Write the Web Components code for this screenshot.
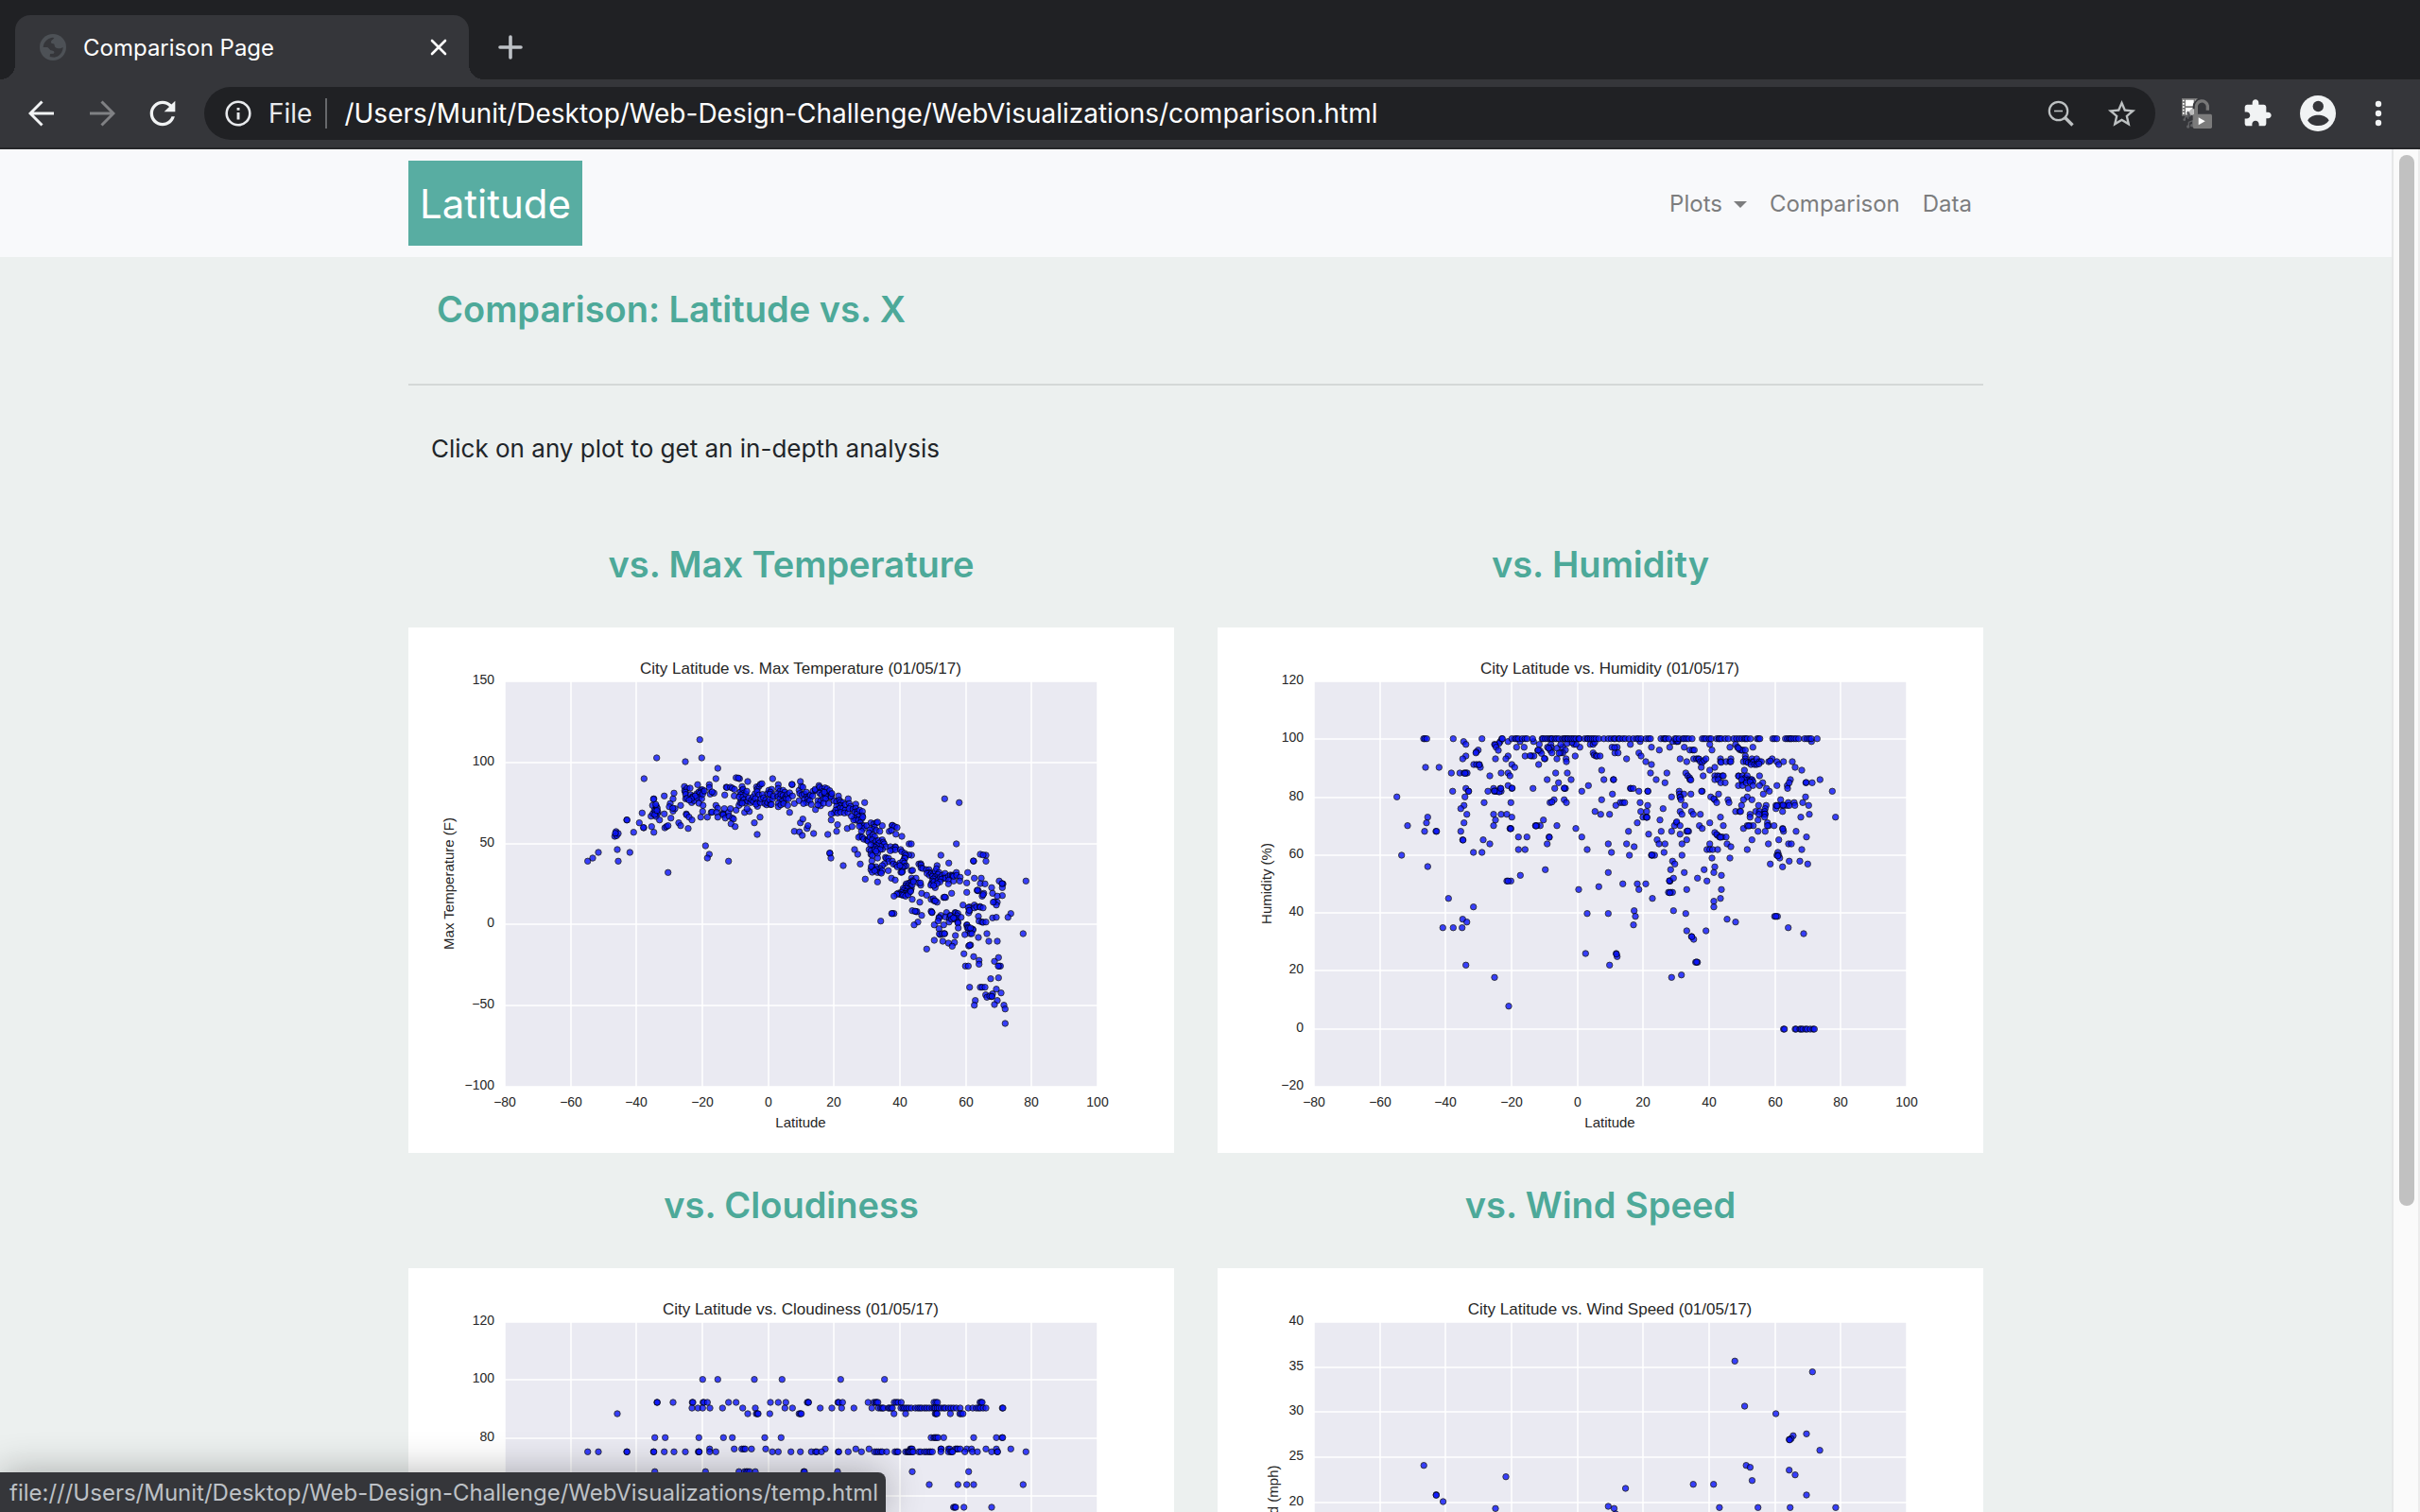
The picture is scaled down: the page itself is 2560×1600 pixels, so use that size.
<!DOCTYPE html>
<html lang="en">
<head>
<meta charset="utf-8">
<title>Comparison Page</title>
<style>
  html, body { margin: 0; height: 100%; overflow: hidden; }
  body { font-family: Inter, "Liberation Sans", sans-serif; }
</style>
</head>
<body>
<browser-window>
  <browser-tab slot="tab">Comparison Page</browser-tab>
  <browser-toolbar slot="toolbar" url="/Users/Munit/Desktop/Web-Design-Challenge/WebVisualizations/comparison.html"></browser-toolbar>
  <site-navbar>Latitude</site-navbar>
  <site-content>
    <span slot="title">Comparison: Latitude vs. X</span>
    <span slot="intro">Click on any plot to get an in-depth analysis</span>
    <plot-card name="Max Temperature" href="temp.html"></plot-card>
    <plot-card name="Humidity" href="humidity.html"></plot-card>
    <plot-card name="Cloudiness" href="cloudiness.html"></plot-card>
    <plot-card name="Wind Speed" href="wind.html"></plot-card>
  </site-content>
  <status-bubble slot="status">file:///Users/Munit/Desktop/Web-Design-Challenge/WebVisualizations/temp.html</status-bubble>
</browser-window>

<script>
const define = (name, html, setup) => customElements.define(name, class extends HTMLElement {
  constructor() {
    super();
    this.attachShadow({ mode: 'open' });
  }
  connectedCallback() {
    this.shadowRoot.innerHTML = typeof html === 'function' ? html(this) : html;
    if (setup) setup(this);
  }
});

/* Scatter data. Each plot keeps its points as "x,y" pairs on its own sheet;
   `map` places the sheet on the 810 x 556 figure: [left, top, x scale, y scale]. */
const plots = {
  'Max Temperature': {
    label: 'Max Temperature (F)', labelX: 48, max: 150, min: -100, step: 50, map: [178, 106, 3, 3],
    points: `391,38 254,96 345,108 397,96 448,129 214,162 442,162 506,159 517,162 513,160 543,171 622,162 710,171 1168,226 1214,238
    1205,369 1156,405 1181,430 1281,402 1299,405 1299,424 1260,424 1259,423 1290,404 1426,487 1378,590 1369,602 1417,654
    35,424 51,414 69,396 129,387 169,396 132,424 290,460 409,375 421,402 415,414 482,424 159,293 160,293 181,332 121,345 125,330 127,343 132,336 123,335
    199,302 208,271 213,318 212,317 238,314 245,332 245,226 244,227 241,247 236,281 242,273 247,262 253,250 256,256 258,268 250,265 256,274 252,282 263,293 251,244 248,276 255,263
    278,217 278,274 280,318 285,314 290,311 299,287 297,241 294,251 306,226 309,208 306,265 312,257 330,247 305,256 324,302 330,311 354,320
    348,274 349,277 357,284 366,293 342,187 343,200 350,193 360,192 345,205 346,212 346,226 351,224 362,213 368,219 370,220 365,238 373,232 381,210 384,181 388,204 395,198 399,197 400,204 392,208 390,220 382,223 397,226 388,240 401,247 376,217 364,226 357,230 400,211 405,201
    400,266 394,284 415,284 421,181 421,190 424,211 436,208 430,204 442,247 448,256 427,269 430,268 444,269 448,284 463,272 466,274 465,277 469,257 472,287 482,269 488,257 484,281 494,287 498,290 490,305 503,314
    475,189 477,190 488,189 494,192 470,214 501,196 500,217 506,262 515,247 519,238 522,229 525,187 525,199 519,205 528,196 530,208 521,213 516,220 528,220 537,211 540,202 531,229 535,238 543,233 546,223 525,240 533,269 548,266 541,257 552,238 555,229 560,220 561,235 566,210 571,188 573,196 579,186 583,180 588,178 573,203 578,214 567,225 573,238 574,250 569,243 583,238 585,226 590,212 593,223 600,230 597,241 603,245 606,238 615,244 612,229 618,244 606,209 610,199 619,196 615,205 613,211 622,226 625,217 640,181 640,193 645,202 655,199 661,205 636,210 639,219 645,226 648,212 655,215 663,220 658,229 651,235 640,240 640,251 648,245 657,241 670,247 665,225 669,212 676,207 672,226 684,181 683,180 685,217 691,241 676,269
    564,302 582,284 573,339 706,199 713,187 718,189 708,209 715,214 722,211 729,205 730,220 722,229 737,219 734,226 730,238 740,231 742,214 706,232 720,241 750,202 758,199 749,217 745,244 757,196 769,184 771,189 779,194 788,191 795,194 780,203 771,208 777,213 788,211 797,207 803,200 808,212 805,219 797,220 790,217 786,205 766,232 774,233 784,226 790,226 774,248 758,260 766,245 784,240 800,241 808,220 810,209 831,217
    691,329 707,331 716,342 731,320 734,311 752,336 710,302 718,290 797,339 804,399 803,398 807,414 846,438 862,226 886,243 914,238 817,232 825,235 834,230 838,236 845,238 840,247 834,248 825,250 830,259 836,256 845,256 852,262 853,244 865,241 869,250 822,262 817,270 808,274 828,271 838,269 850,271 861,270 865,257 877,259 886,256 883,268 891,266 890,274 898,262 907,266 907,280 895,283 882,287 887,294 879,293 872,281 894,293 904,290 908,284 808,293 828,308 825,329 859,320 874,314 900,302 904,311 912,311 910,320 904,329 897,313 921,311 934,302 943,305 951,302 955,300 945,316 939,323 951,326 962,329 970,311 931,324 928,334 900,345 895,348 907,348 911,354 921,357 926,354 925,360 931,347 940,341 946,346 938,356 882,387 892,402 900,433 916,481
    944,366 950,360 958,358 970,356 961,366 973,364 976,369 981,378 970,386 964,377 952,374 943,377 947,380 933,372 928,387 934,391 946,387 955,385 963,387 934,402 938,406 955,399 955,414 937,423 950,392 992,329 1001,311 1002,310 1009,314 1017,317 999,326 1013,338 1032,345 1055,369 1062,369 1063,405 1054,404 1062,454 1066,453
    996,378 1011,378 1012,380 1002,387 1011,388 995,391 1028,387 1032,394 1041,399 1044,405 1040,414 1042,415 980,412 983,415 990,415 990,425 977,432 970,438 1002,424 1005,433 1014,436 1018,442 1026,430 1035,424 1040,430 1046,439 1040,441 1034,444 1026,438 962,447 950,442 938,442 934,451 938,459 952,450 955,460 964,459 970,454 967,462 989,454 955,490 935,441 946,454 999,478 1011,484 1029,459 1034,456 1032,459 965,614 1002,590 1007,590 1000,590
    1086,433 1092,432 1093,436 1093,445 1098,447 1110,451 1118,451 1119,460 1112,463 1120,469 1126,463 1132,466 1129,472 1138,456 1144,438 1142,448 1150,460 1147,466 1138,474 1140,480 1132,480 1129,487 1126,496 1124,500 1134,489 1147,484 1154,475 1160,469 1169,463 1165,478 1158,481 1153,490 1171,478 1180,472 1186,468 1192,469 1195,469 1181,484 1196,487 1180,496 1196,472 1205,460 1206,469 1217,475 1216,487 1241,460 1138,508 1144,495 1133,501
    1063,478 1066,486 1077,478 1085,493 1092,500 1091,493 1059,492 1053,494 1046,496 1044,502 1053,501 1059,504 1062,511 1060,517 1050,511 1044,509 1036,511 1037,517 1046,520 1055,523 1049,526 1041,526 1036,526 1029,523 1020,526 1026,529 1032,531 1037,532 1044,535 1016,529 1007,535 1052,530 1060,520 1065,499 1069,489 1065,545 1089,554 1095,526 1111,532 1125,545 1132,543 1135,550 1144,554 1138,550 1165,539 1171,539 1168,538 1190,526 1238,493 1238,523 1262,478 1284,478 1281,495 1296,496 1271,517 1275,518 1292,526 1287,535 1290,530 1272,516 1317,508 1320,526 1341,487 1351,496 1353,496 1351,508 1350,495 1351,533 1335,535 1326,553 1335,554 1332,563 1322,554
    1065,581 1077,584 1080,584 1074,583 1095,596 1083,617 1071,626 1125,583 1128,587 1127,586 1174,587 1156,596 1150,602 1150,605 1147,614 1170,601 1183,605 1186,596 1187,597 1182,617 1190,608 1201,587 1203,588 1210,590 1208,597 1205,605 1220,602 1201,608 1210,617 1210,620 1196,604 1211,636 1135,626 1150,638 1165,626 1154,657 1151,655 1160,654 1168,654 1167,654 1202,660 1135,675 1162,678 1180,684 1199,682 1192,694 1111,703 1226,563 1247,569 1262,563 1243,571 1247,581 1244,588 1246,580 1262,572 1269,569 1280,568 1281,570 1290,572 1275,599 1277,614 1286,617 1290,618 1299,617 1320,604 1332,602 1238,626 1239,627 1240,635 1244,645 1250,641 1257,640 1258,642 1249,654 1254,654 1232,657 1244,636 1250,636 1275,666 1302,654 1308,678 1335,678 1244,693 1250,690 1247,691 1229,718 1260,727 1277,739 1277,751 1326,742 1339,730 1234,757 1243,757 1341,757 1345,757 1338,757 1339,794 1314,797 1247,824 1281,824 1287,824 1296,824 1332,830 1347,842 1320,845 1298,848 1302,856 1317,854 1311,852 1318,853 1265,866 1335,866 1262,881 1326,879 1356,881 1360,893 1360,939`
  },
  'Humidity': {
    label: 'Humidity (%)', labelX: 57, max: 120, min: -20, step: 20, map: [182, 106, 3, 3],
    rows: { 35: '108 112 118 202 293 356 358 388 398 403 409 421 430 436 454 484 487 494 501 508 513 516 525 530 537 549 555 558 564 567 574 579 585 591 600 602 619 627 630 637 643 649 655 664 680 694 703 712 716 727 730 740 748 760 773 784 790 798 814 822 828 861 870 874 877 886 905 910 919 931 935 942 949 960 992 998 1004 1014 1020 1038 1045 1047 1053 1065 1075 1092 1101 1110 1118 1126 1130 1135 1145 1166 1171 1175 1216 1222 1229 1256 1262 1268 1272 1276 1283 1290 1298 1317 1325 1332 1338 1357',
            957: '1250 1253 1287 1290 1302 1306 1311 1320 1325 1335 1344 1348' },
    points: `235,44 242,53 351,44 376,44 347,50 333,53 335,55 414,44 457,44 338,62 345,72 281,71 275,77 274,80 242,90 232,99 336,99 376,90 369,99 403,62 427,62 430,90 451,90 458,90 446,89 475,53 470,72 478,74 482,82 472,71 473,117 493,99 491,98 501,62 512,53 513,63 510,72 515,80 505,65 531,65 531,99 549,62 543,53 558,71 550,80 543,80 538,81 560,99 561,108 589,90 604,62 585,53 592,53 578,47 563,50 637,53 646,53 651,47 646,80 649,87 655,90 659,90 668,90 706,62 715,80 722,62 725,80 714,63 764,53 795,44 752,99 791,80 798,90 813,108 831,117 831,62 856,71 889,62 898,44 910,44 915,44 914,43 935,62 953,71 962,71 967,71 1016,53 1023,71 1080,62 1098,53 1104,62 1111,70 1117,72 1120,71 1129,71 1129,90 1153,62 1107,65 1339,44
    114,126 157,126 267,117 276,117 285,117 288,126 284,118 388,117 397,126 196,144 223,144 236,144 242,144 246,144 239,145 318,153 354,144 376,144 382,153 527,144 564,144 500,165 576,165 536,175 524,193 555,193 558,193 554,192 631,184 610,202 673,135 680,165 710,165 711,165 707,211 673,229 828,144 880,144 846,165 874,175 922,99 943,108 965,99 974,99 980,99 982,100 986,108 992,110 998,104 1004,99 989,126 1016,135 1032,126 1050,99 1050,108 1052,110 1068,108 1080,108 1083,99 1083,108 995,153 940,144 946,153 952,159 953,165 956,166
    1129,99 1123,108 1132,108 1138,111 1147,108 1150,99 1153,108 1155,109 1147,117 1158,117 1165,117 1168,108 1165,99 1174,108 1180,108 1172,115 1203,108 1214,99 1208,106 1229,108 1235,117 1250,108 1278,108 1287,126 1308,135 1126,135 1032,153 1041,153 1047,154 1056,153 1059,153 1032,165 1043,165 1051,175 1065,175 1107,153 1108,154 1120,153 1129,159 1135,153 1138,165 1147,165 1150,165 1153,171 1135,168 1126,165 1120,172 1117,165 1107,184 1120,184 1132,175 1144,172 1153,184 1138,193 1174,153 1184,175 1174,184 1196,193 1205,202 1186,211 1229,184 1262,184 1272,165 1263,193 1268,175 1321,175 1322,174 1341,175 1366,165 1405,202
    23,220 200,202 242,193 250,202 251,202 239,220 300,238 236,247 226,257 312,202 330,193 332,202 338,202 345,202 351,193 354,202 341,202 348,204 333,201 353,193 376,184 388,193 389,192 385,238 455,193 522,229 509,238 515,236 554,229 561,238 764,193 766,193 773,193 791,202 819,202 820,202 919,202 920,211 934,211 956,211 895,220 922,220 922,221 925,229 992,202 990,202 1019,220 1044,211 1032,229 1029,226 1038,238 1074,229 1077,238 1135,220 1123,229 1150,229 1320,220 732,238 740,238 746,238 718,247 795,238 819,247 868,257 937,247
    245,275 236,302 226,329 232,356 233,357 121,284 117,302 57,311 111,329 147,329 149,329 330,275 354,275 372,275 388,284 336,293 330,311 382,320 385,320 384,321 488,293 478,311 463,311 467,311 464,312 531,311 591,320 610,347 652,266 670,275 698,275 797,266 804,284 816,266 816,284 814,284 817,285 786,302 858,293 922,266 928,275 958,266 964,275 986,275 910,302 904,311 911,299 922,311 983,311 992,320 862,329 895,329 943,329 949,329 946,328 1016,302 1050,284 1059,311 1098,266 1111,266 1117,247 1114,266 1171,247 1162,266 1144,275 1144,284 1174,266 1169,293 1195,247 1192,257 1190,266 1184,275 1192,275 1191,274 1172,275 1190,284 1199,302 1203,311 1220,311 1123,320 1135,311 1144,311 1154,311 1139,312 1199,311 1192,329 1169,329 1226,247 1226,257 1232,247 1241,229 1244,247 1247,266 1253,247 1262,247 1265,238 1268,247 1284,238 1286,247 1229,248 1249,246 1247,320 1250,329 1248,322 1311,238 1330,247 1305,284 1332,275 1415,284 1290,329 1323,347
    38,405 121,441 266,396 293,396 297,356 318,369 409,347 436,347 409,387 430,387 500,369 506,347 507,348 494,451 415,469 372,487 385,487 376,487 627,387 694,369 704,396 694,460 752,369 758,329 776,378 761,405 822,338 849,356 855,369 874,369 871,396 831,405 834,405 841,405 832,404 922,338 943,356 928,369 928,405 898,424 905,433 892,451 935,460 1032,333 1041,342 1038,339 1047,347 1056,347 1068,347 1050,348 1016,369 1007,387 1016,387 1025,387 1041,387 1023,414 1071,369 1083,378 1080,414 1135,387 1150,356 1202,369 1235,356 1208,433 1247,442 1232,396 1229,405 1235,405 1238,414 1232,407 1266,369 1275,369 1268,424 1302,424 1327,433 1308,387
    740,496 664,505 600,514 786,496 791,514 813,496 834,542 889,487 890,487 888,486 901,478 885,523 892,523 898,523 889,524 943,514 977,478 998,451 1007,487 1032,442 1029,460 1053,469 1053,514 1050,542 1029,551 1029,569 187,542 266,569 232,608 245,617 230,635 202,635 169,635 242,754 333,793 378,884 627,590 694,590 776,581 780,599 774,626 901,581 940,590 622,717 719,717 722,727 720,719 698,754 943,645 958,663 965,672 959,664 1004,645 971,745 977,745 974,744 895,793 926,785 1071,608 1098,617 1222,599 1231,599 1226,599 1265,635 1314,654`
  },
  'Cloudiness': {
    label: 'Cloudiness (%)', labelX: 57, max: 120, min: -20, step: 20, map: [178, 98, 3, 3],
    rows: {
      59: '400 448 564 652 838 977',
      132: '255 256 306 367 369 401 404 415 482 506 615 640 664 732 735 736 829 832 844 925 943 949 952 956 1008 1014 1020 1030 1134 1140 1145 1280 1284 1287',
      150: '366 385 400 423 463 527 567 661 685 773 810 841 880 937 958 965 970 974 989 993 998 1002 1029 1035 1040 1047 1054 1062 1075 1083 1089 1095 1104 1111 1119 1128 1134 1138 1144 1150 1157 1165 1170 1180 1188 1196 1205 1217 1243 1257 1268 1275 1281 1290 1299 1351 1353',
      168: '129 543 570 574 576 613 706 710 713 1007 1044 1138 1141 1144 1186 1216 1220 1226',
      244: '248 281 388 466 494 597 649 1125 1134 1138 1142 1147 1165 1260 1332 1350 1352',
      280: '422 500 524 530 535 555 600 789 886 928 1059 1062 1065 1156 1157 1180 1184 1202 1206 1210 1217 1238 1253 1299 1332 1378',
      289: '35 69 159 160 244 245 278 309 345 386 388 389 422 442 621 640 680 710 745 758 762 777 830 832 862 904 945 952 958 965 970 984 1010 1016 1020 1044 1050 1053 1056 1059 1064 1068 1086 1092 1104 1111 1118 1123 1129 1156 1180 1187 1190 1193 1232 1256 1272 1317 1335 1336 1426',
      352: '248 409 515 533 539 543 549 567 721 723 828 1065 1244',
      393: '1119 1210 1238 1260 1417',
      465: '1196 1200 1203 1229 1317'
    }
  },
  'Wind Speed': {
    label: 'Wind Speed (mph)', labelX: 64, max: 40, min: -5, step: 5, map: [-2, -122, 1.912, 3],
    points: `1050,661 1207,695 1070,804 1133,828 1195,892 1168,898 1164,907 1160,910 1161,911 1222,944 421,992 587,1028 446,1085 446,1087 460,1107 566,1129 829,1065 966,1052 1007,1052 1073,992 1081,998 1085,1040 1160,1007 1172,1022 1195,1086 794,1122 806,1129 809,1146 1019,1126 1097,1126 1162,1126 1254,1126`
  }
};

const minus = n => String(n).replace('-', '\u2212');

function figure(name) {
  const p = plots[name], left = 102, right = 729, top = 57, bottom = 486, mid = 415;
  let grid = '', text = '', dots = '';
  for (let v = -80; v <= 100; v += 20) {
    const x = Math.round(left + (v + 80) / 180 * (right - left));
    grid += `<path d="M${x} ${top}V${bottom}"/>`;
    text += `<text x="${x}" y="507" text-anchor="middle">${minus(v)}</text>`;
  }
  for (let v = p.min; v <= p.max; v += p.step) {
    const y = Math.round(bottom - (v - p.min) / (p.max - p.min) * (bottom - top));
    grid += `<path d="M${left} ${y}H${right}"/>`;
    text += `<text x="91" y="${y + 3}" text-anchor="end">${minus(v)}</text>`;
  }
  const pts = (p.points || '').trim().split(/\s+/).filter(Boolean).map(s => s.split(',').map(Number));
  for (const y in p.rows || {}) for (const x of p.rows[y].split(' ')) pts.push([+x, +y]);
  const [ox, oy, sx, sy] = p.map;
  for (const [x, y] of pts) dots += `<circle cx="${(ox + x / sx).toFixed(1)}" cy="${(oy + y / sy).toFixed(1)}" r="3.2"/>`;
  return `<svg viewBox="0 0 810 556" role="img" aria-label="City Latitude vs. ${name}">
    <rect width="810" height="556" fill="#fff"/>
    <rect x="${left}" y="${top}" width="${right - left}" height="${bottom - top}" fill="#eaeaf2"/>
    <g stroke="#fff" stroke-width="1.5">${grid}</g>
    <g class="dots">${dots}</g>
    <g class="tick">${text}</g>
    <text class="label" x="${mid}" y="529" text-anchor="middle">Latitude</text>
    <text class="label" transform="translate(${p.labelX} 271) rotate(-90)" text-anchor="middle">${p.label}</text>
    <text class="title" x="${mid}" y="49" text-anchor="middle">City Latitude vs. ${name} (01/05/17)</text>
  </svg>`;
}

define('plot-card', el => `<style>
  :host { display: block; min-width: 0; }
  h2 { margin: 30px 0 42px; font-size: 38px; line-height: 50px; font-weight: 600; text-align: center; color: #4da999; }
  a { display: block; }
  svg { display: block; width: 100%; height: auto; font-family: "Liberation Sans", sans-serif; fill: #262626; }
  .dots { fill: #0a14ff; stroke: #000; stroke-width: .9; }
  .dots circle { opacity: .8; }
  .tick { font-size: 14px; }
  .label { font-size: 15px; }
  .title { font-size: 17px; }
</style>
<h2>vs. ${el.getAttribute('name')}</h2>
<a href="${el.getAttribute('href')}">${figure(el.getAttribute('name'))}</a>`);

define('site-content', `<style>
  :host { display: block; max-width: 1666px; margin: 0 auto; }
  h1 { margin: 0; padding: 28px 30px 0; font-size: 38px; line-height: 54px; font-weight: 600; color: #4da999; }
  hr { margin: 52px 0 0; border: 0; border-top: 2px solid #d4d8d7; }
  p { margin: 0; padding: 47px 24px; font-size: 26px; line-height: 40px; color: #212529; }
  .grid { display: grid; grid-template-columns: 1fr 1fr; column-gap: 46px; }
</style>
<h1><slot name="title"></slot></h1>
<hr>
<p><slot name="intro"></slot></p>
<div class="grid"><slot></slot></div>`);

define('site-navbar', `<style>
  :host { display: block; background: #f8f9fb; }
  nav { max-width: 1666px; margin: 0 auto; padding: 12px 0; display: flex; justify-content: space-between; align-items: center; }
  a { text-decoration: none; }
  .brand { padding: 2px 12px 0; background: #58ada2; color: #fff; font-size: 42px; line-height: 88px; }
  ul { display: flex; gap: 24px; margin: 0; padding: 2px 12px 0 0; list-style: none; font-size: 24px; line-height: 36px; }
  li a { color: #7c7d7e; display: flex; align-items: center; gap: 12px; }
  .caret::after { content: ""; border: 7px solid transparent; border-top-color: currentColor; border-bottom: 0; }
</style>
<nav>
  <a class="brand" href="index.html"><slot></slot></a>
  <ul>
    <li><a class="caret" href="#plots">Plots</a></li>
    <li><a href="comparison.html">Comparison</a></li>
    <li><a href="data.html">Data</a></li>
  </ul>
</nav>`);

define('status-bubble', `<style>
  :host { display: block; padding: 2px 8px 0 10px; background: #35363a; color: #bdc1c6; font-size: 24px; line-height: 40px;
    border-top-right-radius: 8px; box-shadow: 0 0 40px rgba(0,0,0,.3); white-space: nowrap; }
</style><slot></slot>`);

define('browser-tab', `<style>
  :host { display: flex; align-items: center; position: relative; box-sizing: border-box; width: 480px; height: 68px; padding: 0 16px 0 26px;
    background: #35363a; border-radius: 16px 16px 0 0; color: #fff; font-size: 24px; }
  :host::before, :host::after { content: ""; position: absolute; bottom: 0; width: 16px; height: 16px; }
  :host::before { right: 100%; background: radial-gradient(circle at 0 0, transparent 16px, #35363a 16px); }
  :host::after { left: 100%; background: radial-gradient(circle at 100% 0, transparent 16px, #35363a 16px); }
  svg { display: block; }
  .name { flex: 1; padding-left: 18px; }
  button { display: flex; align-items: center; justify-content: center; width: 32px; height: 32px; padding: 0; border: 0; background: none; }
</style>
<svg width="28" height="28" viewBox="0 0 84 84"><circle cx="42" cy="42" r="42" fill="#4d5156"/><path fill="#35363a" d="M11 42C12 26 24 13 40 11L46 12C42 20 36 18 36 27C38 33 46 28 47 35C47 44 56 46 66 46L74 42C73 60 60 73 46 74L32 72L33 63L44 62C50 58 44 53 36 52C30 50 30 42 22 42Z"/></svg>
<span class="name"><slot></slot></span>
<button aria-label="Close tab"><svg width="18" height="18" viewBox="0 0 18 18"><path d="M2 2l14 14M16 2L2 16" stroke="#fff" stroke-width="2.6" stroke-linecap="round"/></svg></button>`);

define('browser-toolbar', `<style>
  :host { display: flex; align-items: center; gap: 12px; padding: 8px 12px; background: #35363a; border-bottom: 2px solid #26272a; }
  .group { display: flex; }
  button { display: flex; align-items: center; justify-content: center; width: 64px; height: 56px; padding: 0; border: 0; background: none; color: #f1f3f4; }
  svg { display: block; }
  .off { color: #808184; }
  form { flex: 1; display: flex; align-items: center; height: 56px; padding-left: 20px; padding-right: 4px; border-radius: 28px; background: #202124; color: #e8eaed; font-size: 28px; }
  label { margin-left: 16px; padding-right: 14px; border-right: 2px solid #66686b; line-height: 32px; }
  input { flex: 1; min-width: 0; margin-left: 18px; padding: 0; border: 0; outline: 0; background: none; font: inherit; color: #fff; }
  form button { color: #bdc1c2; }
</style>
<div class="group">
  <button aria-label="Back"><svg width="28" height="28" viewBox="0 0 28 28" fill="none" stroke="currentColor" stroke-width="3"><path d="M27 14H3M14.500 1.500L2 14l12.500 12.500"/></svg></button>
  <button class="off" aria-label="Forward" disabled><svg width="28" height="28" viewBox="0 0 28 28" fill="none" stroke="currentColor" stroke-width="3"><path d="M1 14h24M13.500 1.500L26 14 13.500 26.500"/></svg></button>
  <button aria-label="Reload"><svg width="40" height="40" viewBox="0 0 24 24" fill="currentColor"><path d="M17.650 6.350C16.200 4.900 14.210 4 12 4c-4.420 0-7.990 3.580-7.990 8s3.570 8 7.990 8c3.730 0 6.840-2.550 7.730-6h-2.080c-.82 2.330-3.040 4-5.650 4-3.310 0-6-2.690-6-6s2.690-6 6-6c1.660 0 3.140.69 4.220 1.780L13 11h7V4z"/></svg></button>
</div>
<form>
  <svg width="32" height="32" viewBox="0 0 32 32"><circle cx="16" cy="16" r="12.300" fill="none" stroke="currentColor" stroke-width="2.600"/><path fill="currentColor" d="M14.600 10h2.900v2.800h-2.900zM14.600 15h2.900v7.500h-2.900z"/></svg>
  <label for="url">File</label>
  <input id="url" type="text" spellcheck="false">
  <button type="button" aria-label="Zoom"><svg width="28" height="28" viewBox="0 0 28 28" fill="none" stroke="currentColor"><circle cx="11.500" cy="11.500" r="9.700" stroke-width="2.200"/><path d="M7 11.500h9" stroke-width="1.600"/><path d="M18.500 18.500l8 8" stroke-width="3.400"/></svg></button>
  <button type="button" aria-label="Bookmark"><svg width="35" height="35" viewBox="0 0 24 24" fill="currentColor"><path d="M22 9.240l-7.190-.62L12 2 9.190 8.630 2 9.240l5.460 4.730L5.820 21 12 17.270 18.180 21l-1.630-7.030zM12 15.400l-3.760 2.270 1-4.280-3.320-2.880 4.380-.38L12 6.100l1.710 4.040 4.380.38-3.320 2.880 1 4.280z"/></svg></button>
</form>
<div class="group">
  <button aria-label="Media extension"><svg width="32" height="32" viewBox="0 0 96 96">
    <path fill="#777" d="M0 0h50v56H0z"/><path fill="#fff" d="M12 5h26v20H12zM12 30h26v22H12zM3 5h5v5H3zM3 15h5v5H3zM3 25h5v5H3zM3 35h5v5H3zM3 45h5v5H3zM42 5h5v5h-5z"/>
    <path fill="#bbb" d="M14 52l12-14 12-10v24z"/>
    <path fill="#35363a" d="M30 54h34v42H30z"/>
    <path d="M45 34V28a18 18 0 0 1 36-2v12" fill="none" stroke="#35363a" stroke-width="20"/>
    <path d="M46 50V30a18 18 0 0 1 36-6v14" fill="none" stroke="#777" stroke-width="10"/>
    <path d="M10 60v10M10 60l10-3v8M22 76v16M22 76l13-5v16" fill="none" stroke="#606164" stroke-width="4"/><circle cx="8" cy="68" r="4" fill="#606164"/><circle cx="20" cy="90" r="5" fill="#606164"/><circle cx="32" cy="86" r="5" fill="#606164"/><path d="M16 46l3-6 5 6 5 12-9 2z" fill="#55565a"/>
    <rect x="35" y="50" width="61" height="46" rx="5" fill="#7b7b7b"/><path fill="#fff" d="M53 61l21 12-21 12z"/></svg></button>
  <button aria-label="Extensions"><svg width="32" height="32" viewBox="0 0 24 24" fill="currentColor"><path d="M20.500 11H19V7c0-1.100-.9-2-2-2h-4V3.500C13 2.120 11.880 1 10.500 1S8 2.120 8 3.500V5H4c-1.100 0-1.990.9-1.990 2v3.800H3.500c1.490 0 2.700 1.210 2.700 2.700s-1.210 2.700-2.700 2.700H2V20c0 1.100.9 2 2 2h3.800v-1.500c0-1.490 1.210-2.700 2.700-2.700 1.490 0 2.700 1.210 2.700 2.700V22H17c1.100 0 2-.9 2-2v-4h1.500c1.380 0 2.500-1.120 2.500-2.500S21.880 11 20.500 11z"/></svg></button>
  <button aria-label="Profile"><svg width="38" height="38" viewBox="0 0 38 38"><circle cx="19" cy="19" r="19" fill="currentColor"/><circle cx="19.300" cy="11.500" r="5.700" fill="#35363a"/><path fill="#35363a" d="M8.200 26.500C10 22.500 15 20.800 19.300 20.800S28.600 22.500 30.700 26.500C28 30.300 24 32 19.300 32S10.500 30.300 8.200 26.500z"/></svg></button>
  <button aria-label="Menu"><svg width="8" height="28" viewBox="0 0 8 28" fill="currentColor"><circle cx="4" cy="4" r="3.200"/><circle cx="4" cy="14" r="3.200"/><circle cx="4" cy="24" r="3.200"/></svg></button>
</div>`, el => { el.shadowRoot.querySelector('input').value = el.getAttribute('url'); });

define('browser-window', `<style>
  :host { display: flex; flex-direction: column; position: relative; height: 100vh; overflow: hidden; background: #ecf0ef; }
  .strip { display: flex; align-items: center; padding: 16px 16px 0; background: #202124; }
  .strip button { display: flex; padding: 0; margin-left: 31px; border: 0; background: none; }
  .view { flex: 1; min-height: 0; display: flex; }
  main { flex: 1; min-width: 0; overflow-y: auto; scrollbar-width: none; }
  .scroll { box-sizing: border-box; width: 30px; padding: 6px 4px 0 6px; background: #fafafa; border-left: 2px solid #e6e7e8; border-right: 2px solid #ececec; }
  .thumb { height: calc(100% * 24 / 31); width: 16px; border-radius: 8px; background: #c1c1c1; }
  .status { position: absolute; left: 0; bottom: 0; }
</style>
<div class="strip"><slot name="tab"></slot><button aria-label="New tab"><svg width="26" height="26" viewBox="0 0 26 26"><path d="M13 2v22M2 13h22" stroke="#bdc1c6" stroke-width="3.600" stroke-linecap="round"/></svg></button></div>
<slot name="toolbar"></slot>
<div class="view"><main><slot></slot></main><div class="scroll"><div class="thumb"></div></div></div>
<div class="status"><slot name="status"></slot></div>`);
</script>
</body>
</html>
